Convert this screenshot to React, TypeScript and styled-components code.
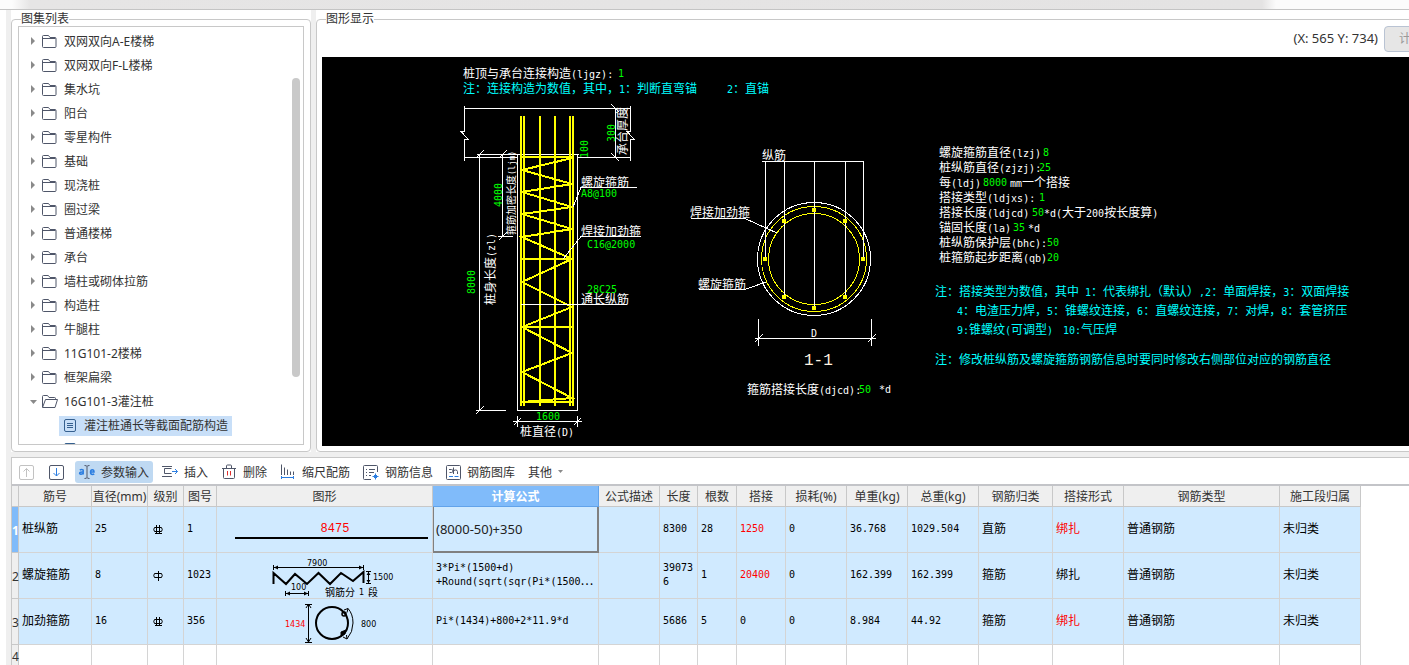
import React from "react";
import styled, { createGlobalStyle, css } from "styled-components";

const UI_FONT = `"Noto Sans", "Noto Sans CJK SC", sans-serif`;
const MONO_FONT = `"DejaVu Sans Mono", "Noto Sans CJK SC", monospace`;
const CJK_FONT = `"Noto Sans CJK SC", sans-serif`;

const GlobalStyle = createGlobalStyle`
  *, *::before, *::after { box-sizing: border-box; }
  body {
    margin: 0;
    overflow: hidden;
    background: #ffffff;
    color: #333333;
    font-family: ${UI_FONT};
    font-size: 12px;
  }
  button, input { font: inherit; color: inherit; }
`;

/* ---------- page frame ---------- */

const Shell = styled.div`
  display: flex;
  flex-direction: column;
  width: calc(100% + 48px);
  height: 100vh;
  overflow: hidden;
`;

const TopStrip = styled.div`
  flex: none;
  height: 10px;
  border-bottom: 1px solid #c4c4c4;
  background: linear-gradient(90deg, #fcfcfc 0, #fcfcfc 12px, #e6e5e5 30px, #e4e3e3 1262px, #fbfbfb 1276px);
`;

const Main = styled.main`
  flex: 1;
  min-height: 0;
  display: flex;
  flex-direction: column;
  gap: 5px;
  padding-left: 5px;
  border-left: 6px solid #ffffff;
  background: #efefef;
`;

const Panels = styled.div`
  flex: none;
  display: flex;
  gap: 5px;
`;

const Panel = styled.section<{ $grow?: boolean }>`
  background: #ffffff;
  ${(p) => (p.$grow ? "flex: 1; min-width: 0;" : "flex: 0 0 300px;")}
`;

const Group = styled.fieldset<{ $pad: number }>`
  margin: 0;
  min-width: 0;
  padding: 0 ${(p) => p.$pad}px ${(p) => p.$pad}px;
  border: 1px solid #c8c8c8;
  border-radius: 4px;
`;

const GroupTitle = styled.legend<{ $pad: number }>`
  margin: 0 0 -2px ${(p) => 9 - p.$pad}px;
  padding: 1px 0;
  line-height: 16px;
`;

/* ---------- atlas tree ---------- */

const TreeBox = styled.div`
  display: flex;
  height: 419px;
  padding: 3px 3px 0 0;
  overflow: hidden;
  border: 1px solid #c8c8c8;
`;

const TreeList = styled.ul`
  flex: 1;
  margin: 0;
  padding: 0;
  list-style: none;
`;

const TreeRow = styled.button<{ $child?: boolean }>`
  display: flex;
  align-items: center;
  width: 100%;
  height: 24px;
  padding: 0 0 0 ${(p) => (p.$child ? 40 : 11)}px;
  border: 0;
  background: none;
  text-align: left;
  line-height: 20px;
`;

const TreeText = styled.span`
  margin-left: 8px;
`;

const TreeLeaf = styled.span<{ $selected?: boolean }>`
  display: flex;
  align-items: center;
  height: 20px;
  padding: 0 4px 0 5px;
  background: ${(p) => (p.$selected ? "#c8dff8" : "none")};
`;

const ScrollThumb = styled.div`
  flex: none;
  width: 8px;
  height: 299px;
  margin-top: 48px;
  border-radius: 4px;
  background: #c9c9c9;
`;

const Icon = styled.svg`
  display: block;
  flex: none;
  overflow: visible;
  fill: none;
`;

const FOLDERS = [
  "双网双向A-E楼梯",
  "双网双向F-L楼梯",
  "集水坑",
  "阳台",
  "零星构件",
  "基础",
  "现浇桩",
  "圈过梁",
  "普通楼梯",
  "承台",
  "墙柱或砌体拉筋",
  "构造柱",
  "牛腿柱",
  "11G101-2楼梯",
  "框架扁梁",
];

const ClosedFolder = () => (
  <Icon width="26" height="14" viewBox="0 0 26 14" aria-hidden>
    <path d="M1 2v8l4-4z" fill="#8a8a8a" />
    <path d="M12.500 11.500v-10q0-1 1-1h5l1.500 2h5q1 0 1 1v8q0 1-1 1h-11.500q-1 0-1-1zM12.500 3.500h13" stroke="#4f5669" />
  </Icon>
);

const OpenFolder = () => (
  <Icon width="26" height="14" viewBox="0 0 26 14" aria-hidden>
    <path d="M0 5h7l-3.500 4z" fill="#8a8a8a" />
    <path d="M12.500 12v-10.500q0-1 1-1h4l1.500 2h5.500q1 0 1 1v1M12.500 12.500l3-8h12l-2.500 8z" stroke="#4f5669" />
  </Icon>
);

const DocIcon = () => (
  <Icon width="12" height="14" viewBox="0 0 12 14" aria-hidden>
    <rect x="0.500" y="0.500" width="11" height="12" rx="1.500" stroke="#35608f" />
    <path d="M3 4.500h6M3 6.500h6M3 8.500h6" stroke="#35608f" />
  </Icon>
);

const AtlasTree = () => (
  <TreeBox>
    <TreeList>
      {FOLDERS.map((name) => (
        <li key={name}>
          <TreeRow type="button" aria-expanded={false}>
            <ClosedFolder />
            <TreeText>{name}</TreeText>
          </TreeRow>
        </li>
      ))}
      <li>
        <TreeRow type="button" aria-expanded>
          <OpenFolder />
          <TreeText>16G101-3灌注桩</TreeText>
        </TreeRow>
        <TreeList>
          <li>
            <TreeRow type="button" $child aria-current="true">
              <TreeLeaf $selected>
                <DocIcon />
                <TreeText>灌注桩通长等截面配筋构造</TreeText>
              </TreeLeaf>
            </TreeRow>
          </li>
          <li>
            <TreeRow type="button" $child aria-label="下一项">
              <TreeLeaf>
                <DocIcon />
              </TreeLeaf>
            </TreeRow>
          </li>
        </TreeList>
      </li>
    </TreeList>
    <ScrollThumb />
  </TreeBox>
);

/* ---------- drawing ---------- */

const ViewerHead = styled.div`
  display: flex;
  justify-content: flex-end;
  align-items: flex-start;
  gap: 6px;
  height: 31px;
  font-size: 13px;
  line-height: 24px;
`;

const CalcButton = styled.button`
  width: 67px;
  height: 26px;
  padding: 0 0 0 14px;
  border: 1px solid #b9c3d3;
  border-radius: 4px;
  background: #e6e6e6;
  color: #9a9a9a;
  font-size: 12px;
  text-align: left;
`;

const Canvas = styled.div`
  overflow: hidden;
  background: #000000;
`;

const Drawing = styled.svg`
  display: block;
  fill: none;
  shape-rendering: crispEdges;
`;

const CadTextBase = styled.text<{ $small?: boolean }>`
  font-family: ${CJK_FONT};
  font-size: ${(p) => (p.$small ? 10 : 12)}px;
  white-space: pre;
`;

const W = "#ffffff";
const G = "#00ff00";
const C = "#00ffff";
const Y = "#ffff00";

type CadProps = { x: number; y: number; color?: string; up?: boolean; small?: boolean; children: string };

/* Half-width runs are set at the half-em advance of the full-width ones. */
const CadText = ({ x, y, color = W, up, small, children }: CadProps) => (
  <CadTextBase
    x={x}
    y={y}
    fill={color}
    $small={small}
    transform={up ? `rotate(-90 ${x} ${y})` : undefined}
  >
    {children.split(/([ -~]+)/).map((run, i) =>
      i % 2 ? (
        <tspan key={i} fontFamily={MONO_FONT} fontSize={small ? 8 : 10}>
          {run}
        </tspan>
      ) : (
        run
      )
    )}
  </CadTextBase>
);

const PILE_BARS = [521, 524, 540, 555, 570, 573];
const SECTION_BARS = [
  [814, 210], [784, 221], [845, 221], [765, 259], [863, 259], [784, 297], [845, 297], [814, 308],
];

const PileElevation = () => (
  <g>
    <path
      stroke={W}
      d="M464.500 106V131.500H461L468.500 139.500H464.500V161M630.500 106V131.500H627L634.500 139.500H630.500V161
         M464 108.500H631M464 157.500H518M577 157.500H631M477 154.500H579
         M615.500 108V157M611 104L619 112M611 153L619 161
         M479.500 154V410M476 158L484 150M476 414L484 406M476 410.500H506
         M502.500 154V236M499 158L507 150M499 240L507 232M498 236.500H513
         M517.500 154V410.500H577.500V154
         M517.500 416V427M577.500 416V427M513 421.500H582M514 425L521 418M574 425L581 418"
    />
    {PILE_BARS.map((x) => (
      <path key={x} stroke={Y} strokeWidth="2" d={`M${x} 116V406`} />
    ))}
    <path stroke={Y} strokeWidth="2" d="M520 157H574M520 259H574M520 327H574M520 402H574" />
    <path
      stroke={Y}
      strokeWidth="2"
      d="M572 158L522 170L572 184L522 192L572 207L522 214L572 229L522 237L572 259L522 282L572 307L522 327L572 353L522 372L572 398L522 402"
    />
    <path
      stroke={W}
      d="M637 187.500H581L573 207M641 236.500H581L563 259M521 304.500H627"
    />
    <CadText x={463} y={78}>桩顶与承台连接构造(ljgz):</CadText>
    <CadText x={618} y={77} color={G}>1</CadText>
    <CadText x={463} y={93} color={C}>注：连接构造为数值，其中，1：判断直弯锚</CadText>
    <CadText x={727} y={93} color={C}>2：直锚</CadText>
    <CadText x={615} y={142} up color={G}>300</CadText>
    <CadText x={588} y={158} up color={G}>100</CadText>
    <CadText x={627} y={155} up>承台厚度</CadText>
    <CadText x={502} y={207} up color={G}>4000</CadText>
    <CadText x={515} y={235} up small>箍筋加密长度(ljm)</CadText>
    <CadText x={475} y={294} up color={G}>8000</CadText>
    <CadText x={495} y={305} up>桩身长度(zl)</CadText>
    <CadText x={581} y={187}>螺旋箍筋</CadText>
    <CadText x={581} y={197} color={G}>A8@100</CadText>
    <CadText x={581} y={236}>焊接加劲箍</CadText>
    <CadText x={587} y={248} color={G}>C16@2000</CadText>
    <CadText x={587} y={293} color={G}>28C25</CadText>
    <CadText x={581} y={304}>通长纵筋</CadText>
    <CadText x={536} y={420} color={G}>1600</CadText>
    <CadText x={520} y={436}>桩直径(D)</CadText>
  </g>
);

const PileSection = () => (
  <g>
    <circle cx="814" cy="259" r="56.500" stroke={W} />
    <circle cx="814" cy="259" r="52.500" stroke={Y} />
    <circle cx="814" cy="259" r="45.500" stroke={Y} />
    <path
      stroke={W}
      d="M762 161.500H863.500V258M765.500 161V258M784.500 161V296M814.500 161V307M845.500 161V296
         M691 218.500H745L777 233M699 289.500H745L766 282
         M758.500 319V346M871.500 319V346M755 338.500H876M755 342L763 334M868 342L876 334"
    />
    {SECTION_BARS.map(([cx, cy]) => (
      <circle key={`${cx}-${cy}`} cx={cx} cy={cy} r="2.500" fill={Y} />
    ))}
    <CadText x={762} y={160}>纵筋</CadText>
    <CadText x={690} y={217}>焊接加劲箍</CadText>
    <CadText x={698} y={289}>螺旋箍筋</CadText>
    <CadText x={811} y={337}>D</CadText>
    <text x="804" y="365" fill="#fff3e0" fontFamily="Liberation Mono, monospace" fontSize="16">1-1</text>
    <CadText x={747} y={394}>箍筋搭接长度(djcd):</CadText>
    <CadText x={859} y={393} color={G}>50</CadText>
    <CadText x={879} y={393}>*d</CadText>
  </g>
);

const Parameters = () => (
  <g>
    <CadText x={939} y={157}>螺旋箍筋直径(lzj)</CadText>
    <CadText x={1043} y={156} color={G}>8</CadText>
    <CadText x={939} y={172}>桩纵筋直径(zjzj):</CadText>
    <CadText x={1039} y={171} color={G}>25</CadText>
    <CadText x={939} y={187}>每(ldj)</CadText>
    <CadText x={983} y={186} color={G}>8000</CadText>
    <CadText x={1010} y={187}>mm一个搭接</CadText>
    <CadText x={939} y={202}>搭接类型(ldjxs):</CadText>
    <CadText x={1039} y={201} color={G}>1</CadText>
    <CadText x={939} y={217}>搭接长度(ldjcd)</CadText>
    <CadText x={1032} y={216} color={G}>50</CadText>
    <CadText x={1044} y={217}>*d(大于200按长度算)</CadText>
    <CadText x={939} y={232}>锚固长度(la)</CadText>
    <CadText x={1013} y={231} color={G}>35</CadText>
    <CadText x={1028} y={232}>*d</CadText>
    <CadText x={939} y={247}>桩纵筋保护层(bhc):</CadText>
    <CadText x={1047} y={246} color={G}>50</CadText>
    <CadText x={939} y={262}>桩箍筋起步距离(qb)</CadText>
    <CadText x={1047} y={261} color={G}>20</CadText>
    <CadText x={935} y={296} color={C}>注：搭接类型为数值，其中 1：代表绑扎（默认）,2：单面焊接，3：双面焊接</CadText>
    <CadText x={957} y={315} color={C}>4：电渣压力焊，5：锥螺纹连接，6：直螺纹连接，7：对焊，8：套管挤压</CadText>
    <CadText x={957} y={334} color={C}>9:锥螺纹(可调型)</CadText>
    <CadText x={1063} y={334} color={C}>10:气压焊</CadText>
    <CadText x={935} y={364} color={C}>注：修改桩纵筋及螺旋箍筋钢筋信息时要同时修改右侧部位对应的钢筋直径</CadText>
  </g>
);

/* ---------- toolbar ---------- */

const Bottom = styled.section`
  flex: 1;
  min-height: 0;
  overflow: hidden;
  border: solid #c8c8c8;
  border-width: 1px 0 0 1px;
  background: #ffffff;
`;

const Toolbar = styled.div`
  display: flex;
  align-items: center;
  gap: 5px;
  height: 28px;
  padding: 2px 0 0 3px;
  border-bottom: 2px solid #c3c4c8;
`;

const Tool = styled.button<{ $active?: boolean }>`
  display: flex;
  align-items: center;
  gap: 6px;
  height: 22px;
  padding: 0 4px;
  border: 0;
  border-radius: 3px;
  background: ${(p) => (p.$active ? "#bfd9f2" : "none")};
  white-space: nowrap;
`;

const IconTool = styled(Tool)`
  width: 25px;
`;

const INK = "#4f5669";
const BLUE = "#2b7de0";

const ToolBarRow = () => (
  <Toolbar role="toolbar">
    <IconTool type="button" disabled aria-label="上移">
      <Icon width="15" height="15" viewBox="0 0 15 15" stroke="#c2c2c2">
        <rect x="0.500" y="0.500" width="14" height="14" rx="1.500" />
        <path d="M7.500 12V3.500M4.500 6.500l3-3 3 3" />
      </Icon>
    </IconTool>
    <IconTool type="button" aria-label="下移">
      <Icon width="15" height="15" viewBox="0 0 15 15">
        <rect x="0.500" y="0.500" width="14" height="14" rx="1.500" stroke={INK} />
        <path d="M7.500 3V11M4.500 8l3 3 3-3" stroke={BLUE} />
      </Icon>
    </IconTool>
    <Tool type="button" $active>
      <Icon width="16" height="14" viewBox="0 0 16 14">
        <path d="M0.800 5q2-1 3.400 0v4.500M4 7q-3.400-.2-3.400 1.400Q1.500 10 4 8.500" stroke={BLUE} strokeWidth="1.500" />
        <path d="M5.500 0.500q2 0 2.500 1 .5-1 2.500-1M8 1.500v11M5.500 13.500q2 0 2.500-1 .5 1 2.500 1" stroke={INK} />
        <path d="M11.500 7h3.500Q15 4.700 13.300 4.700T11.500 7q0 2.500 2 2.500 1 0 1.700-.6" stroke={BLUE} strokeWidth="1.500" />
      </Icon>
      参数输入
    </Tool>
    <Tool type="button">
      <Icon width="16" height="14" viewBox="0 0 16 14">
        <path d="M10 1.500H0M0 11.500H10M9.500 3.500H2.500V8.500H9.500" stroke={INK} />
        <path d="M10 6.500H15.500M13 4l2.500 2.500L13 9" stroke={BLUE} />
      </Icon>
      插入
    </Tool>
    <Tool type="button">
      <Icon width="16" height="16" viewBox="-1 0 16 16">
        <path d="M0 4.500H14M4.500 4V2q0-1 1-1h3q1 0 1 1V4M1.500 5v8.500q0 1 1 1h9q1 0 1-1V5" stroke={INK} />
        <path d="M5.500 7v4.500M8.500 7v4.500" stroke="#e02f2f" />
      </Icon>
      删除
    </Tool>
    <Tool type="button">
      <Icon width="16" height="16" viewBox="-1 0 16 16">
        <path d="M0.500 0.500V11M3.500 3.500V11M6.500 5.500V11M9.500 7.500V11M12.500 7.500V11" stroke={INK} />
        <path d="M0.500 12V15M12.500 12V15M0.500 13.500H12.500" stroke={BLUE} />
      </Icon>
      缩尺配筋
    </Tool>
    <Tool type="button">
      <Icon width="16" height="15" viewBox="0 0 16 15">
        <path d="M14.500 7V1.500q0-1-1-1H1.500q-1 0-1 1v12q0 1 1 1H8M3 4.500h1M6 4.500h6M3 7.500h1M6 7.500h5M3 10.500h1M6 10.500h2" stroke={INK} />
        <path d="M12.500 8.500v6M9.500 11.500h6M10.500 11.500l2-2 2 2-2 2z" stroke={BLUE} />
      </Icon>
      钢筋信息
    </Tool>
    <Tool type="button">
      <Icon width="15" height="15" viewBox="0 0 15 15">
        <rect x="0.500" y="0.500" width="14" height="14" rx="1" stroke={INK} />
        <path d="M3 4.500H5.500q1.500 0 1.500 1.500t-1.500 1.500H3.500M7.500 2.500V9M7.500 6.500q0-1.500 2-1.500t2 1.500V9" stroke={INK} />
        <path d="M3 11.500h4M8.500 11.500h4" stroke={BLUE} />
      </Icon>
      钢筋图库
    </Tool>
    <Tool type="button" aria-haspopup="menu">
      其他
      <Icon width="6" height="4" viewBox="0 0 6 4">
        <path d="M0 0h5L2.500 3z" fill="#8a8a8a" />
      </Icon>
    </Tool>
  </Toolbar>
);

/* ---------- rebar table ---------- */

const Grid = styled.table`
  width: 1349px;
  table-layout: fixed;
  border-collapse: separate;
  border-spacing: 0;
`;

const Head = styled.th<{ $selected?: boolean }>`
  height: 21px;
  padding: 2px 0 0;
  border: solid #c8c8c8;
  border-width: 0 1px 1px 0;
  background: #efefef;
  font-weight: 400;
  line-height: 18px;
  white-space: nowrap;
  ${(p) =>
    p.$selected &&
    css`
      border-color: #62a3ea;
      background: #80bbfa;
      color: #ffffff;
      font-weight: 700;
    `}
`;

const RowNo = styled.th<{ $selected?: boolean; $last?: boolean }>`
  height: ${(p) => (p.$last ? 22 : 46)}px;
  padding: 2px 0 0;
  border: solid #c8c8c8;
  border-width: 0 1px 1px 0;
  background: ${(p) => (p.$selected ? "#80bbfa" : "#efefef")};
  color: ${(p) => (p.$selected ? "#ffffff" : "#333333")};
  font-weight: ${(p) => (p.$selected ? 700 : 400)};
`;

const Cell = styled.td<{ $on?: boolean; $mono?: boolean; $red?: boolean; $flush?: boolean; $editing?: boolean }>`
  padding: ${(p) => (p.$flush ? "0" : p.$mono ? "0 3px 2px" : "0 3px 4px")};
  border: solid #d4d4d4;
  border-width: 0 1px 1px 0;
  background: ${(p) => (p.$on ? "#d0eaff" : "#ffffff")};
  color: ${(p) => (p.$red ? "#ff0000" : "#000000")};
  font-family: ${(p) => (p.$mono ? MONO_FONT : CJK_FONT)};
  font-size: ${(p) => (p.$mono ? 10 : 12)}px;
  line-height: 14px;
  word-break: break-all;
  ${(p) =>
    p.$editing &&
    css`
      border-color: #808080;
      box-shadow: inset 1px 0 #808080, inset -1px -1px #808080;
    `}
`;

const FormulaInput = styled.input`
  display: block;
  width: 100%;
  height: 40px;
  padding: 0 3px 2px;
  border: 0;
  outline: 0;
  background: none;
  color: #222222;
  font-family: ${UI_FONT};
  font-size: 13px;
`;

const Figure = styled.svg`
  display: block;
  fill: none;
`;

const Wide = styled.span`
  font-family: ${CJK_FONT};
  font-size: 12px;
  line-height: 1px;
`;

const COLUMNS: [string, number][] = [
  ["筋号", 73],
  ["直径(mm)", 56],
  ["级别", 36],
  ["图号", 33],
  ["图形", 216],
  ["计算公式", 166],
  ["公式描述", 61],
  ["长度", 38],
  ["根数", 39],
  ["搭接", 49],
  ["损耗(%)", 61],
  ["单重(kg)", 61],
  ["总重(kg)", 71],
  ["钢筋归类", 74],
  ["搭接形式", 71],
  ["钢筋类型", 156],
  ["施工段归属", 81],
];

const GradeMark = ({ plain }: { plain?: boolean }) => (
  <Icon width="15" height="12" viewBox="0 0 15 12" stroke="#000000" role="img" aria-label={plain ? "A" : "C"}>
    {plain ? (
      <path d="M3.500 5.500h7q1.500 2 0 4h-7q-1.500-2 0-4M7.500 3v10" />
    ) : (
      <path d="M3.500 5.500h7q1.500 2 0 4h-7q-1.500-2 0-4M5.500 3v9M8.500 3v9M4 11.500h7" />
    )}
  </Icon>
);

const StraightBar = () => (
  <Figure width="215" height="45" viewBox="0 0 215 45">
    <text x="118" y="25" textAnchor="middle" fill="#ff0000" fontFamily="Liberation Mono, monospace" fontSize="12">8475</text>
    <path d="M18 31H211" stroke="#000000" strokeWidth="2" />
  </Figure>
);

const Spiral = () => (
  <Figure width="215" height="45" viewBox="0 0 215 45" fontFamily="DejaVu Sans, sans-serif" fontSize="8">
    <path
      d="M56.500 31V20L69 31L78 21L90 31L101.500 20L113 31L124 20L136 28L146.500 19V30"
      stroke="#000000"
      strokeWidth="2"
    />
    <path
      stroke="#000000"
      d="M56.500 12v5M146.500 12v5M56 14.500H147M68.500 38v5M91.500 38v5M68 40.500H92M149 18.500h5M149 30.500h5M151.500 18v13"
    />
    <path fill="#000000" d="M57 14.500l4-2v4zM146 14.500l-4-2v4zM69 40.500l4-2v4zM91 40.500l-4-2v4zM151.500 19l-2 3h4zM151.500 30l-2-3h4z" />
    <text x="90" y="13" fill="#000000">7900</text>
    <text x="74" y="37" fill="#000000">100</text>
    <text x="156" y="27" fill="#000000">1500</text>
    <text x="108" y="43" fill="#000000" fontFamily={CJK_FONT} fontSize="10">钢筋分</text>
    <text x="142" y="42" fill="#000000">1</text>
    <text x="151" y="43" fill="#000000" fontFamily={CJK_FONT} fontSize="10">段</text>
  </Figure>
);

const Ring = () => (
  <Figure width="215" height="45" viewBox="0 0 215 45" fontFamily="DejaVu Sans, sans-serif" fontSize="8">
    <circle cx="115" cy="24" r="16" stroke="#000000" strokeWidth="2" />
    <path stroke="#000000" d="M91.500 5V43M88 5.500h7M88 43.500h7M89 9l2.500-4 2.500 4M89 39l2.500 4 2.500-4" />
    <path stroke="#000000" d="M127 11l4-1.500Q136 15 136 24T130 40l-4-2M131 9.500l-1 4M130 40l-.500-4" />
    <circle cx="127" cy="15" r="2" stroke="#000000" strokeWidth="1.500" />
    <path d="M124 33l5-2-1 4-4 2z" fill="#000000" stroke="#000000" />
    <text x="68" y="28" fill="#ff0000">1434</text>
    <text x="144" y="28" fill="#000000">800</text>
  </Figure>
);

type Rebar = {
  name: string;
  dia: string;
  plain?: boolean;
  no: string;
  figure: React.ReactNode;
  formula: React.ReactNode;
  editing?: boolean;
  nums: string[];
  kind: string;
  redLap: boolean;
  redJoint: boolean;
};

const ROWS: Rebar[] = [
  {
    name: "桩纵筋", dia: "25", no: "1", figure: <StraightBar />, editing: true,
    formula: <FormulaInput aria-label="计算公式" defaultValue="(8000-50)+350" />,
    nums: ["8300", "28", "1250", "0", "36.768", "1029.504"], kind: "直筋", redLap: true, redJoint: true,
  },
  {
    name: "螺旋箍筋", dia: "8", plain: true, no: "1023", figure: <Spiral />,
    formula: <>3*Pi*(1500+d)<br />+Round(sqrt(sqr(Pi*(1500<Wide>⋯</Wide></>,
    nums: ["390736", "1", "20400", "0", "162.399", "162.399"], kind: "箍筋", redLap: true, redJoint: false,
  },
  {
    name: "加劲箍筋", dia: "16", no: "356", figure: <Ring />, formula: "Pi*(1434)+800+2*11.9*d",
    nums: ["5686", "5", "0", "0", "8.984", "44.92"], kind: "箍筋", redLap: false, redJoint: true,
  },
];

const RebarTable = () => (
  <Grid>
    <colgroup>
      <col style={{ width: 7 }} />
      {COLUMNS.map(([name, width]) => (
        <col key={name} style={{ width }} />
      ))}
    </colgroup>
    <thead>
      <tr>
        <Head aria-label="序号" />
        {COLUMNS.map(([name]) => (
          <Head key={name} scope="col" $selected={name === "计算公式"}>
            {name}
          </Head>
        ))}
      </tr>
    </thead>
    <tbody>
      {ROWS.map((r, i) => (
        <tr key={r.name}>
          <RowNo scope="row" $selected={i === 0}>{i + 1}</RowNo>
          <Cell $on>{r.name}</Cell>
          <Cell $on $mono>{r.dia}</Cell>
          <Cell $on><GradeMark plain={r.plain} /></Cell>
          <Cell $on $mono>{r.no}</Cell>
          <Cell $on $flush>{r.figure}</Cell>
          <Cell $on $mono $flush={r.editing} $editing={r.editing}>{r.formula}</Cell>
          <Cell $on />
          {r.nums.map((n, k) => (
            <Cell key={k} $on $mono $red={k === 2 && r.redLap}>{n}</Cell>
          ))}
          <Cell $on>{r.kind}</Cell>
          <Cell $on $red={r.redJoint}>绑扎</Cell>
          <Cell $on>普通钢筋</Cell>
          <Cell $on>未归类</Cell>
        </tr>
      ))}
      <tr>
        <RowNo scope="row" $last>4</RowNo>
        {COLUMNS.map(([name]) => (
          <Cell key={name} />
        ))}
      </tr>
    </tbody>
  </Grid>
);

export default function App() {
  return (
    <>
      <GlobalStyle />
      <Shell>
        <TopStrip />
        <Main>
          <Panels>
            <Panel>
              <Group $pad={6}>
                <GroupTitle $pad={6}>图集列表</GroupTitle>
                <AtlasTree />
              </Group>
            </Panel>
            <Panel $grow>
              <Group $pad={5}>
                <GroupTitle $pad={5}>图形显示</GroupTitle>
                <ViewerHead>
                  <span>(X: 565 Y: 734)</span>
                  <CalcButton type="button" disabled>计算</CalcButton>
                </ViewerHead>
                <Canvas>
                  <Drawing width="1087" height="389" viewBox="322 57 1087 389">
                    <PileElevation />
                    <PileSection />
                    <Parameters />
                  </Drawing>
                </Canvas>
              </Group>
            </Panel>
          </Panels>
          <Bottom>
            <ToolBarRow />
            <RebarTable />
          </Bottom>
        </Main>
      </Shell>
    </>
  );
}
